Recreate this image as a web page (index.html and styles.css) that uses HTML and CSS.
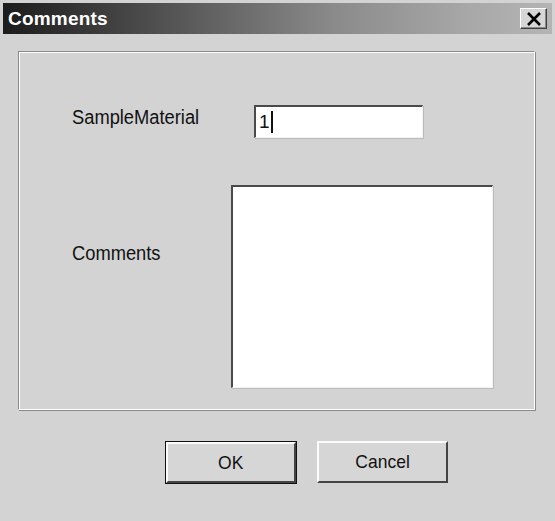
FILE: index.html
```html
<!DOCTYPE html>
<html lang="en">
<head>
  <meta charset="UTF-8">
  <title>Comments</title>
  <link rel="stylesheet" href="styles.css">
</head>
<body>
  <div class="window">
    <div class="titlebar">
      <span class="title">Comments</span>
      <span class="close-btn">
        <svg width="16" height="14" viewBox="0 0 16 14">
          <path d="M2 1 L14 13 M14 1 L2 13" stroke="#000" stroke-width="2.6"/>
        </svg>
      </span>
    </div>
    <div class="content">
      <div class="group">
        <div class="row row-material">
          <span class="label label-material">SampleMaterial</span>
          <div class="field field-input"><span>1</span><span class="caret"></span></div>
        </div>
        <div class="row row-comments">
          <span class="label label-comments">Comments</span>
          <div class="field field-area"></div>
        </div>
      </div>
      <div class="buttons">
        <div class="btn btn-default"><span>OK</span></div>
        <div class="btn"><span>Cancel</span></div>
      </div>
    </div>
  </div>
</body>
</html>
```

FILE: styles.css
```css
body {
  margin: 0;
  background: #e6e6e6;
  font-family: "Liberation Sans", Arial, sans-serif;
  color: #111;
}

.window {
  width: 549px;
  height: 516px;
  padding: 3px;
  background: #d3d3d3;
  border-right: 1px solid #555;
  border-bottom: 1px solid #555;
  display: flex;
  flex-direction: column;
}

.titlebar {
  height: 31px;
  display: flex;
  align-items: center;
  justify-content: space-between;
  background: linear-gradient(to right, #1c1c1c, #4a4a4a 25%, #8a8a8a 60%, #a8a8a8 85%, #b4b4b4);
  padding: 0 5px 0 5px;
}

.title {
  color: #fff;
  font-weight: bold;
  font-size: 19px;
  letter-spacing: 0.2px;
}

.close-btn {
  width: 25px;
  height: 19px;
  display: flex;
  align-items: center;
  justify-content: center;
  background: #d6d6d6;
  border-top: 1px solid #fff;
  border-left: 1px solid #fff;
  border-right: 1px solid #404040;
  border-bottom: 1px solid #404040;
  box-shadow: inset -1px -1px 0 #888;
}

.content {
  flex: 1;
  padding: 17px 0 0 15px;
}

.group {
  width: 515px;
  height: 357px;
  border-top: 1px solid #8a8a8a;
  border-left: 1px solid #8a8a8a;
  border-right: 1px solid #fff;
  border-bottom: 1px solid #fff;
  box-shadow: inset 1px 1px 0 #fff, 1px 1px 0 #8a8a8a;
}

.row {
  display: flex;
  align-items: flex-start;
  padding-left: 53px;
}

.row-material {
  margin-top: 53px;
}

.row-comments {
  margin-top: 47px;
}

.label {
  font-size: 20px;
  line-height: 22px;
  transform: scaleX(0.915);
  transform-origin: left center;
}

.label-material {
  width: 182px;
  margin-top: 1px;
}

.label-comments {
  width: 159px;
  margin-top: 57px;
}

.field {
  background: #fff;
  border-top: 2px solid #4a4a4a;
  border-left: 2px solid #4a4a4a;
  border-right: 1px solid #f2f2f2;
  border-bottom: 1px solid #f2f2f2;
  box-shadow: 1px 1px 0 #bbb;
}

.field-input {
  display: flex;
  align-items: center;
  padding-left: 3px;
  box-sizing: border-box;
  width: 169px;
  height: 33px;
  font-size: 19px;
}

.caret {
  width: 2px;
  height: 22px;
  background: #111;
  margin-left: 1px;
}

.field-area {
  width: 259px;
  height: 200px;
}

.buttons {
  display: flex;
  gap: 21px;
  margin-top: 31px;
  padding-left: 147px;
}

.btn {
  width: 127px;
  height: 38px;
  display: flex;
  align-items: center;
  justify-content: center;
  font-size: 19px;
  background: #d6d6d6;
  border-top: 2px solid #fbfbfb;
  border-left: 2px solid #fbfbfb;
  border-right: 2px solid #444;
  border-bottom: 2px solid #444;
}

.btn span {
  transform: scaleX(0.92);
}

.btn-default {
  width: 126px;
  height: 37px;
  outline: 1px solid #111;
  margin-left: 1px;
  margin-top: 1px;
}
```
